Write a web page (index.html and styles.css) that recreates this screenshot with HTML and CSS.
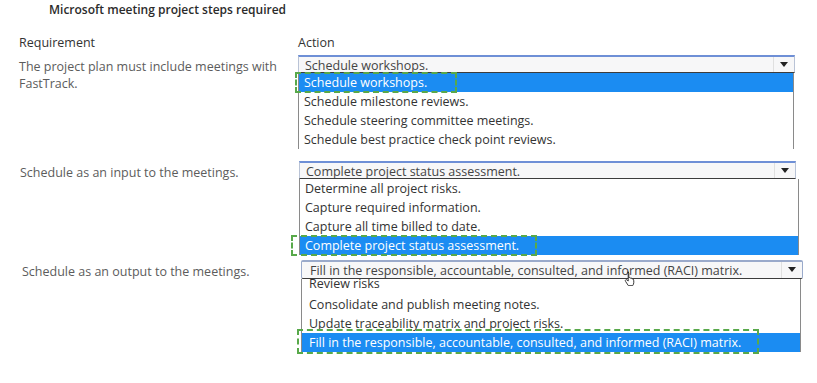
FILE: index.html
```html
<!DOCTYPE html>
<html lang="en">
<head>
    <meta charset="UTF-8">
    <title>Microsoft meeting project steps required</title>
    <link rel="stylesheet" href="styles.css">
</head>
<body>
    <div class="title">Microsoft meeting project steps required</div>

    <div class="row head">
        <div class="req">Requirement</div>
        <div class="act">Action</div>
    </div>

    <!-- pregunta 1 -->
    <div class="row r1">
        <div class="req">The project plan must include meetings with FastTrack.</div>
        <div class="act">
            <div class="select">
                <span class="value">Schedule workshops.</span>
                <span class="arrow"></span>
            </div>
            <ul class="list">
                <li class="picked">Schedule workshops.<span class="mark m1"></span></li>
                <li>Schedule milestone reviews.</li>
                <li>Schedule steering committee meetings.</li>
                <li>Schedule best practice check point reviews.</li>
            </ul>
        </div>
    </div>

    <!-- pregunta 2 -->
    <div class="row r2">
        <div class="req">Schedule as an input to the meetings.</div>
        <div class="act">
            <div class="select">
                <span class="value">Complete project status assessment.</span>
                <span class="arrow"></span>
            </div>
            <ul class="list">
                <li>Determine all project risks.</li>
                <li>Capture required information.</li>
                <li>Capture all time billed to date.</li>
                <li class="picked">Complete project status assessment.<span class="mark m2"></span></li>
            </ul>
        </div>
    </div>

    <!-- pregunta 3 -->
    <div class="row r3">
        <div class="req">Schedule as an output to the meetings.</div>
        <div class="act">
            <div class="select">
                <span class="value">Fill in the responsible, accountable, consulted, and informed (RACI) matrix.</span>
                <span class="arrow"></span>
                <svg class="cursor" width="12" height="15" viewBox="0 0 12 15">
                    <path d="M3.5 1.2c.8 0 1.3.5 1.3 1.3v4.3l.3-.1c.7-.3 1.4 0 1.6.6.6-.3 1.3 0 1.5.6.6-.2 1.3.1 1.4.8.1.5.2 1.6.2 2.6 0 1.4-.5 2.5-1.2 3.4H4.4L1.7 10.6c-.5-.6-.5-1.3 0-1.7.5-.4 1.200-.3 1.6.2l.9 1V2.5c0-.8.1-1.300.8-1.3z" fill="#fff" stroke="#222" stroke-width=".9"/>
                </svg>
            </div>
            <ul class="list">
                <li class="cut">Review risks</li>
                <li>Consolidate and publish meeting notes.</li>
                <li>Update traceability matrix and project risks.</li>
                <li class="picked">Fill in the responsible, accountable, consulted, and informed (RACI) matrix.<span class="mark m3"></span></li>
            </ul>
        </div>
    </div>
</body>
</html>
```

FILE: styles.css
```css
body {
    margin: 0;
    background-color: #fff;
    font-family: "Open Sans", Arial, sans-serif;
    font-size: 12.5px;
    color: #333;
    width: 817px;
    height: 383px;
    overflow: hidden;
}

.title {
    height: 30px;
    line-height: 20px;
    padding-left: 49px;
    font-size: 12px;
    font-weight: 600;
    color: #2b2b2b;
}

.row {
    display: flex;
}
.req {
    width: 279px;
    padding-left: 19px;
    color: #5c5c5c;
    line-height: 17px;
    padding-top: 3px;
}
.act {
    width: 500px;
}

.head {
    height: 25px;
}
.head .req,
.head .act {
    padding-top: 0;
    line-height: 26px;
    color: #333;
}

.r1 { margin-bottom: 12px; }
.r2 { margin-bottom: 5px; }
.r2 .req { padding-left: 20px; }
.r3 .req { padding-left: 22px; }

/* caja del select */
.select {
    position: relative;
    display: flex;
    align-items: flex-end;
    width: 495px;
    height: 15px;
    border: 1px solid #b9c3d6;
    border-top: 2px solid #6e8fd6;
    border-bottom: 1px solid #3c3c3c;
    background-color: #f7f7f8;
}
.select .value {
    flex: 1;
    padding-left: 6px;
    line-height: 17px;
    height: 15px;
    overflow: hidden;
    white-space: nowrap;
    color: #444;
}
.select .arrow {
    width: 20px;
    height: 15px;
    border-left: 1px solid #e0e0e0;
    position: relative;
}
.select .arrow::after {
    content: "";
    position: absolute;
    left: 6px;
    top: 5px;
    border-left: 4px solid transparent;
    border-right: 4px solid transparent;
    border-top: 5px solid #222;
}
.r3 .select {
    width: 500px;
    height: 16px;
    border-radius: 2px;
    border-color: #9aaacb;
    border-bottom-color: #3c3c3c;
}
.r3 .select .value {
    height: 16px;
    line-height: 18px;
    padding-left: 8px;
}
.r3 .select .arrow { height: 16px; }

.cursor {
    position: absolute;
    left: 322px;
    top: 9px;
}

/* lista desplegada */
.list {
    list-style: none;
    margin: 0;
    padding: 0;
    width: 494px;
    border-left: 1px solid #8a8a8a;
    border-right: 1px solid #8a8a8a;
}
.r2 .list,
.r3 .list { width: 498px; }
.list li {
    position: relative;
    height: 19px;
    line-height: 19px;
    padding-left: 5px;
    color: #333;
    white-space: nowrap;
}
.list li.cut {
    height: 16px;
    line-height: 10px;
    overflow: hidden;
}
.list li.picked {
    background-color: #1b8cf2;
    color: #fff;
}
.r3 .list li { padding-left: 7px; }

/* marco verde punteado */
.mark {
    position: absolute;
    top: -1px;
    height: 17px;
    border: 2px dashed #58a94a;
}
.m1 { left: -4px; width: 158px; }
.m2 { left: -9px; width: 242px; }
.m3 { left: -5px; width: 458px; top: -4px; height: 21px; }
```
